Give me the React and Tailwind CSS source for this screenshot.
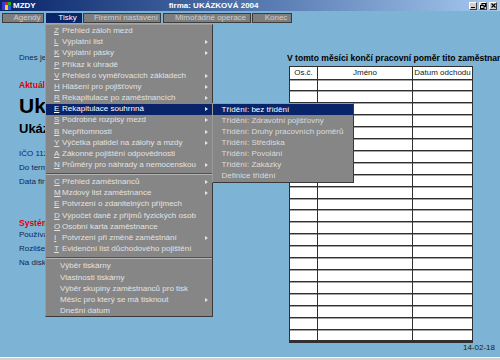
import React from 'react';

const topItems = [
  { k: 'Z', t: 'Přehled záloh mezd' },
  { k: 'L', t: 'Výplatní list', sub: true },
  { k: 'K', t: 'Výplatní pásky', sub: true },
  { k: 'P', t: 'Příkaz k úhradě' },
  { k: 'V', t: 'Přehled o vyměřovacích základech', sub: true },
  { k: 'H', t: 'Hlášení pro pojišťovny', sub: true },
  { k: 'R', t: 'Rekapitulace po zaměstnancích', sub: true },
  { k: 'E', t: 'Rekapitulace souhrnná', sub: true, active: true },
  { k: 'S', t: 'Podrobné rozpisy mezd', sub: true },
  { k: 'B', t: 'Nepřítomnosti', sub: true },
  { k: 'Y', t: 'Výčetka platidel na zálohy a mzdy', sub: true },
  { k: 'A', t: 'Zákonné pojištění odpovědnosti' },
  { k: 'N', t: 'Průměry pro náhrady a nemocenskou', sub: true },
];

const midItems = [
  { k: 'C', t: 'Přehled zaměstnanců', sub: true },
  { k: 'M', t: 'Mzdový list zaměstnance', sub: true },
  { k: 'E', t: 'Potvrzení o zdanitelných příjmech' },
  { k: 'D', t: 'Výpočet daně z příjmů fyzických osob' },
  { k: 'O', t: 'Osobní karta zaměstnance' },
  { k: 'I', t: 'Potvrzení při změně zaměstnání', sub: true },
  { k: 'T', t: 'Evidenční list důchodového pojištění' },
];

const lowItems = [
  { t: 'Výběr tiskárny' },
  { t: 'Vlastnosti tiskárny' },
  { t: 'Výběr skupiny zaměstnanců pro tisk' },
  { t: 'Měsíc pro který se má tisknout', sub: true },
  { t: 'Dnešní datum' },
];

const subItems = [
  'Třídění: bez třídění',
  'Třídění: Zdravotní pojišťovny',
  'Třídění: Druhy pracovních poměrů',
  'Třídění: Střediska',
  'Třídění: Povolání',
  'Třídění: Zakázky',
  'Definice třídění',
];

const menuBar = [
  { t: 'Agendy', w: 'w-[42px]' },
  { t: 'Tisky', w: 'w-[36px]', active: true },
  { t: 'Firemní nastavení', w: 'w-[78px]' },
  { t: 'Mimořádné operace', w: 'w-[88px]' },
  { t: 'Konec', w: 'w-[40px]' },
];

const Arrow = () => (
  <span className="ml-auto mr-[4px] w-0 h-0 border-l-[3px] border-l-[#e4e4e4] border-y-[2.5px] border-y-transparent" />
);

const MenuItem = ({ item }) => (
  <div
    className={
      'h-[11.2px] flex items-center whitespace-nowrap ' +
      (item.active ? 'bg-[#0a246a] text-white' : '')
    }
  >
    {item.k ? (
      <>
        <span className="ml-[8px] w-[8px] underline underline-offset-[1px]">{item.k}</span>
        <span>{item.t}</span>
      </>
    ) : (
      <span className="ml-[14px]">{item.t}</span>
    )}
    {item.sub && <Arrow />}
  </div>
);

const Separator = ({ h }) => (
  <div className={'flex items-center ' + h}>
    <div className="w-full h-[2px] border-t border-[#505050] border-b border-b-[#b4b4b4]" />
  </div>
);

const WinButton = ({ children }) => (
  <div className="w-[8px] h-[8px] bg-[#d4d0c8] border border-t-white border-l-white border-r-[#404040] border-b-[#404040] flex items-center justify-center">
    {children}
  </div>
);

export default function App() {
  const rows = Array.from({ length: 22 });
  return (
    <div className="relative w-[500px] h-[360px] overflow-hidden bg-[#7db4d5] flex flex-col font-['Liberation_Sans',Arial,sans-serif] text-[8px]">
      {/* title bar */}
      <div className="h-[11px] flex items-center bg-gradient-to-r from-[#0a246a] to-[#a6caf0] text-white font-bold leading-none">
        <svg className="ml-[2px]" width="9" height="8" viewBox="0 0 9 8">
          <rect x="0" y="0" width="3" height="8" fill="#3a3ad0" />
          <rect x="3" y="0" width="3" height="3" fill="#e02020" />
          <rect x="6" y="0" width="3" height="3" fill="#20b020" />
          <rect x="3" y="3" width="3" height="5" fill="#f0d020" />
          <rect x="6" y="3" width="3" height="5" fill="#2060e0" />
        </svg>
        <span className="ml-[2px]">MZDY</span>
        <span className="ml-[133px]">firma: UKÁZKOVÁ 2004</span>
        <div className="ml-auto mr-[3px] flex gap-[2px]">
          <WinButton>
            <span className="mt-[3px] w-[4px] h-[1px] bg-black" />
          </WinButton>
          <WinButton>
            <svg width="6" height="6" viewBox="0 0 6 6">
              <rect x="2" y="0.5" width="3.5" height="3" fill="none" stroke="black" strokeWidth="1" />
              <rect x="0.5" y="2.5" width="3.5" height="3" fill="#d4d0c8" stroke="black" strokeWidth="1" />
            </svg>
          </WinButton>
          <WinButton>
            <svg width="5" height="5" viewBox="0 0 5 5">
              <path d="M0.5 0.5 L4.5 4.5 M4.5 0.5 L0.5 4.5" stroke="black" strokeWidth="1.2" />
            </svg>
          </WinButton>
        </div>
      </div>

      {/* menu bar */}
      <div className="mt-[2px] h-[10px] flex gap-[1.5px] pl-[2px]">
        {menuBar.map((m) => (
          <div
            key={m.t}
            className={
              'h-full flex items-center justify-center pl-[8px] whitespace-nowrap leading-none border ' +
              m.w +
              (m.active
                ? ' bg-[#0a246a] text-white border-[#0a246a]'
                : ' bg-[#7e7e7e] text-[#cfcfcf] border-[#3c3c3c]')
            }
          >
            {m.t}
          </div>
        ))}
      </div>

      {/* content */}
      <div className="flex-1 flex">
        <div className="w-[287px] shrink-0 pl-[19px] pt-[30px]">
          <div className="w-[26px] overflow-hidden whitespace-nowrap text-[#14244e]">
            <div className="leading-[10px]">Dnes je úterý</div>
            <div className="mt-[17px] leading-[10px] font-bold text-[#e00000] text-[8.5px]">Aktuální firma</div>
            <div className="mt-[3.7px] leading-[24px] font-bold text-black text-[21px]">Ukázková</div>
            <div className="mt-[3.6px] leading-[15px] font-bold text-black text-[13px]">Ukázková</div>
            <div className="mt-[12.7px] leading-[10px]">IČO 11223344</div>
            <div className="mt-[3.6px] leading-[10px]">Do termínu</div>
            <div className="mt-[4.5px] leading-[10px]">Data firmy</div>
            <div className="mt-[30.5px] leading-[10px] font-bold text-[#e00000] text-[8.5px]">Systém</div>
            <div className="mt-[2.3px] leading-[10px]">Používaná verze</div>
            <div className="mt-[4px] leading-[10px]">Rozlišení</div>
            <div className="mt-[4px] leading-[10px]">Na disku</div>
          </div>
        </div>

        <div className="flex-1 min-w-0 overflow-hidden pt-[30px] whitespace-nowrap">
          <div className="leading-[10px] font-bold text-black text-[8.6px]">
            V tomto měsíci končí pracovní poměr tito zaměstnanci:
          </div>
          <div className="mt-[3px] ml-[2px] w-[184px] border-l border-r border-b-2 border-[#303030] bg-white text-[#202020]">
            <div className="grid grid-cols-[28px_95px_59px] h-[13.5px] border-t border-b border-[#303030] leading-none">
              <div className="border-r border-[#303030] flex items-center justify-center">Os.č.</div>
              <div className="border-r border-[#303030] flex items-center justify-center">Jméno</div>
              <div className="flex items-center justify-center">Datum odchodu</div>
            </div>
            {rows.map((_, i) => (
              <div
                key={i}
                className="grid grid-cols-[28px_95px_59px] h-[11.92px] border-b border-[#303030] shadow-[inset_0_1px_0_#a4a4a4]"
              >
                <div className="border-r border-[#303030]" />
                <div className="border-r border-[#303030]" />
                <div />
              </div>
            ))}
          </div>
          <div className="text-right pr-[5px] leading-[10px] text-[#202020]">14-02-18</div>
        </div>
      </div>

      {/* status bar */}
      <div className="h-[3px] bg-[#d4d0c8] border-t border-white" />

      {/* Tisky dropdown */}
      <div className="absolute left-[45px] top-[24px] w-[168px] h-[293px] pt-[0.4px] bg-[#868686] text-[#e2e2e2] leading-none border border-t-[#9a9a9a] border-l-[#9a9a9a] border-r-[#3a3a3a] border-b-[#3a3a3a]">
        {topItems.map((it, i) => (
          <MenuItem key={'a' + i} item={it} />
        ))}
        <Separator h="h-[5.7px]" />
        {midItems.map((it, i) => (
          <MenuItem key={'b' + i} item={it} />
        ))}
        <Separator h="h-[6px]" />
        {lowItems.map((it, i) => (
          <MenuItem key={'c' + i} item={it} />
        ))}
      </div>

      {/* submenu */}
      <div className="absolute left-[212px] top-[103px] w-[142px] h-[80px] bg-[#868686] text-[#dcdcdc] leading-none border border-t-[#9a9a9a] border-l-[#9a9a9a] border-r-[#3a3a3a] border-b-[#3a3a3a]">
        {subItems.map((t, i) => (
          <div
            key={t}
            className={
              'h-[11.1px] flex items-center pl-[8.6px] whitespace-nowrap ' +
              (i === 0 ? 'bg-[#0a246a] text-white' : '')
            }
          >
            {t}
          </div>
        ))}
      </div>
    </div>
  );
}
